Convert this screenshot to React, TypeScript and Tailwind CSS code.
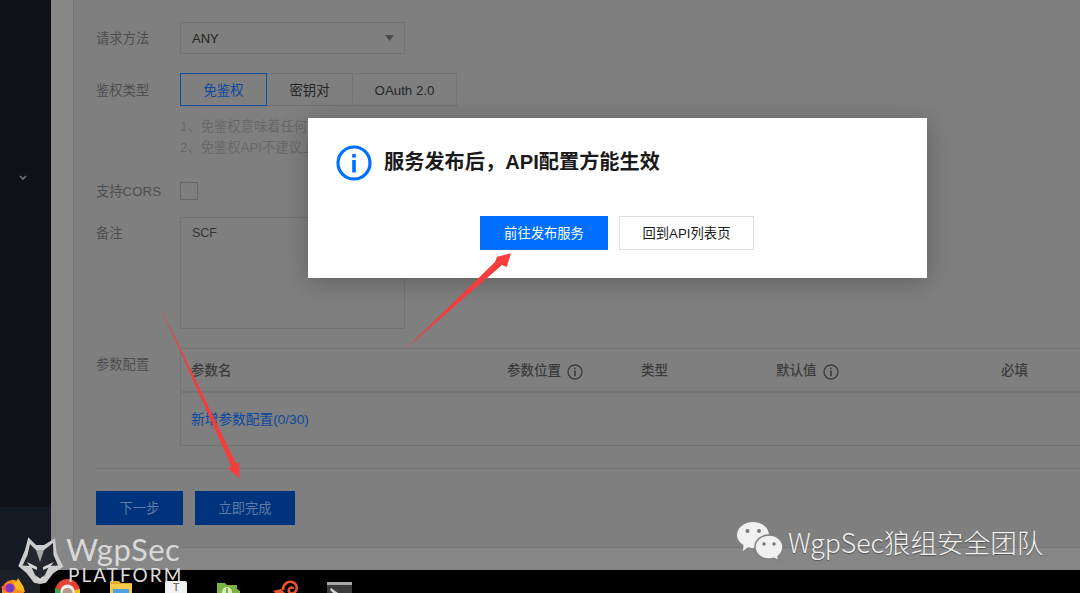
import React from "react";

const Info = ({ size = 16 }: { size?: number }) => (
  <svg width={size} height={size} viewBox="0 0 16 16" fill="none" className="shrink-0">
    <circle cx="8" cy="8" r="7" stroke="currentColor" strokeWidth="1.3" />
    <rect x="7.2" y="3.6" width="1.6" height="1.6" fill="currentColor" />
    <rect x="7.2" y="6.4" width="1.6" height="5.8" fill="currentColor" />
  </svg>
);

const Label = ({ children, className = "" }: { children: React.ReactNode; className?: string }) => (
  <div className={`w-[84px] shrink-0 text-[13.3px] text-[#4e4e4e] ${className}`}>{children}</div>
);

const Arrows = () => (
  <svg className="absolute left-0 top-0 pointer-events-none" width="1080" height="593" viewBox="0 0 1080 593">
    <polygon points="405,349.5 495,262 497,256.7 511,253.3 506.7,267 502,265" fill="#f43d3d" />
    <polygon points="160,306 236,463.5 239.3,462.5 239.3,478.3 227.7,468.3 231.5,466.5" fill="#f43d3d" />
  </svg>
);

const WolfLogo = () => (
  <svg className="absolute left-[17px] top-[535px]" width="48" height="50" viewBox="0 0 48 50" fill="none">
    <path d="M11.3 2.3 L19 10 L27 10 L38 3.3 L39.7 18.3 L46.3 31.7 L36.3 38.3 L29 47.7 L23 49 L17 47.7 L9.7 38.3 L1.3 31 L8 15 Z" fill="#cdcdcd" />
    <path d="M13 9 L19 15 L27 15 L36 8 L36.5 20 L41 30.5 L32 31 L28 40 L23 44 L18 40 L14 31 L5.5 30.5 L10.5 20 Z" fill="#24272e" />
    <path d="M19 15 L27 15 L23 27 Z" fill="#a5a5a5" />
    <path d="M10 27 L20 32 L20 35 L13 32 Z M37 27 L26 32 L26 35 L33 32 Z" fill="#d6d6d6" />
    <path d="M20 42 L23 45 L26 42" stroke="#e0e0e0" strokeWidth="1.4" />
  </svg>
);

const WeChat = () => (
  <svg className="absolute left-[737px] top-[522px]" width="46" height="40" viewBox="0 0 46 40">
    <path d="M16 0 C25 0 32 6 32 13 C32 20 25 26 16 26 C14 26 12.5 25.8 11 25.3 L6 29 L6.5 23 C2.5 20.5 0 17 0 13 C0 6 7 0 16 0 Z" fill="#f0f0f0" />
    <circle cx="10.5" cy="9" r="2" fill="#777" />
    <circle cx="22" cy="9" r="2" fill="#777" />
    <path d="M32 13 C40 13 46 18.5 46 25 C46 29 44 32 41 34.5 L42 39 L37 36.3 C35.5 36.8 34 37 32 37 C24 37 18 31.7 18 25 C18 18.5 24 13 32 13 Z" fill="#f0f0f0" stroke="#808080" strokeWidth="1.5" />
    <circle cx="27" cy="22" r="1.7" fill="#777" />
    <circle cx="37" cy="22" r="1.7" fill="#777" />
  </svg>
);

const Taskbar = () => (
  <div className="h-[23px] bg-black flex items-start overflow-hidden shrink-0">
    <div className="w-[40px] h-[23px] bg-[#1d2127] shrink-0 pl-[1px] pt-[8px] overflow-hidden">
      <svg width="24" height="24" viewBox="0 0 24 24">
        <circle cx="12" cy="13" r="11" fill="#ff8a1c" />
        <path d="M11 1 L15 5 L17 0 L22 8 L24 14 L16 12 Z" fill="#ffb821" />
        <path d="M0 9 L6 6 L12 10 L4 14 Z" fill="#ff5a3c" />
        <circle cx="9" cy="10" r="4.5" fill="#7d36c7" />
      </svg>
    </div>
    <svg className="ml-[15px] mt-[9px] shrink-0" width="25" height="25" viewBox="0 0 25 25">
      <circle cx="12.5" cy="12.5" r="12.5" fill="#e54335" />
      <path d="M0 9 L8 12 L12 25 A12.5 12.5 0 0 1 0 9 Z" fill="#34a853" />
      <path d="M25 10 L16 12 L14 25 A12.5 12.5 0 0 0 25 10 Z" fill="#f5bd22" />
      <circle cx="12.5" cy="12.5" r="7" fill="#f4efe8" />
      <circle cx="12.5" cy="14" r="5.2" fill="#b59a8a" />
    </svg>
    <svg className="ml-[30px] mt-[11px] shrink-0" width="22" height="22" viewBox="0 0 22 22">
      <path d="M0 0 H9 L11 2 H22 V22 H0 Z" fill="#e5a92f" />
      <rect y="3" width="22" height="19" fill="#f7c948" />
      <rect x="3" y="8" width="16" height="14" fill="#4aa3e0" />
    </svg>
    <div className="ml-[33px] mt-[11px] w-[22px] h-[12px] bg-[#f2f2f2] rounded-t-[2px] shrink-0 text-center text-[#555] text-[11px] leading-[12px] font-['Liberation_Sans',sans-serif]">
      T
    </div>
    <svg className="ml-[30px] mt-[13px] shrink-0" width="23" height="20" viewBox="0 0 23 20">
      <path d="M0 0 H8 L10 2 H20 V6 L23 8 V20 H0 Z" fill="#7cb342" />
      <circle cx="10" cy="9" r="5" fill="#d9ecb8" />
      <rect x="9" y="5" width="2" height="6" fill="#7cb342" />
    </svg>
    <svg className="ml-[33px] mt-[10px] shrink-0" width="26" height="23" viewBox="0 0 26 23" fill="none">
      <path d="M0 11 L8 9 L12 13 L8 18" fill="#e5542a" />
      <path d="M10 10 C10 4 15 1 19 2 C24 3 25 9 22 12 C19 15 15 13 16 9 C17 7 20 7 20 9" stroke="#e5542a" strokeWidth="2.6" />
    </svg>
    <svg className="ml-[28px] mt-[12px] shrink-0" width="25" height="21" viewBox="0 0 25 21">
      <rect width="25" height="21" rx="2" fill="#3b3b3b" />
      <rect width="25" height="3" fill="#a8a8a8" />
      <path d="M4 6 L11 11 L8.5 13 L3 8 Z" fill="#d5d5d5" />
    </svg>
  </div>
);

export default function App() {
  return (
    <div className="relative w-[1080px] h-[593px] overflow-hidden flex flex-col bg-black font-['Liberation_Sans','Noto_Sans_CJK_SC',sans-serif]">
      <div className="flex h-[570px] shrink-0">
        <aside className="w-[51px] shrink-0 flex flex-col bg-[#101217]">
          <div className="flex-1 pt-[175px] pl-[19px]">
            <svg width="8" height="6" viewBox="0 0 8 6" fill="none">
              <path d="M1 1 L4 4 L7 1" stroke="#6f7277" strokeWidth="1.6" />
            </svg>
          </div>
          <div className="h-[63px] bg-[#141924]" />
        </aside>
        <main className="flex-1 min-w-0 bg-[#868686] pl-[22px] pb-[22px]">
          <div className="h-full bg-[#7f7f7f] border-l border-b border-[#757575] pl-[22px] pt-[22px] overflow-hidden">
            <div className="flex items-center h-[32px]">
              <Label className="pt-[2px]">请求方法</Label>
              <div className="w-[225px] h-[32px] border border-[#737373] flex items-center justify-between pl-[11px] pr-[10px] pt-[2px] text-[13px] text-[#222]">
                ANY
                <svg width="9" height="6" viewBox="0 0 9 6" className="-mt-[2px]">
                  <polygon points="0,0 9,0 4.5,6" fill="#4a4a4a" />
                </svg>
              </div>
            </div>
            <div className="flex items-center h-[33px] mt-[19px]">
              <Label className="pt-[2px]">鉴权类型</Label>
              <div className="flex h-[33px] text-[13.3px] text-[#262626]">
                <div className="w-[87px] pt-[3px] border border-[#0f4ea3] text-[#0c48a0] flex items-center justify-center">免鉴权</div>
                <div className="w-[86px] pt-[3px] border-y border-r border-[#737373] flex items-center justify-center">密钥对</div>
                <div className="w-[104px] pt-[3px] border-y border-r border-[#737373] flex items-center justify-center">OAuth 2.0</div>
              </div>
            </div>
            <div className="ml-[84px] mt-[10px] text-[13.3px] leading-[21px] text-[#686868]">
              <div>1、免鉴权意味着任何人都可以访问</div>
              <div>2、免鉴权API不建议上线使用</div>
            </div>
            <div className="flex items-center h-[18px] mt-[24px]">
              <Label className="pt-[2px]">支持CORS</Label>
              <div className="w-[18px] h-[18px] border border-[#666]" />
            </div>
            <div className="flex mt-[17px]">
              <Label className="pt-[7px]">备注</Label>
              <div className="w-[225px] h-[112px] border border-[#737373] pl-[11px] pt-[6px] text-[12.5px] text-[#333]">SCF</div>
            </div>
            <div className="flex mt-[19px]">
              <Label className="pt-[7px]">参数配置</Label>
              <div className="w-[920px] shrink-0 border-y border-l border-[#737373] h-[98px]">
                <div className="h-[44px] pt-[3px] border-b-2 border-[#767676] grid grid-cols-[316px_134px_135px_225px_1fr] items-center pl-[10px] text-[13.5px] font-medium text-[#3c3c3c]">
                  <div>参数名</div>
                  <div className="flex items-center gap-[6px]">参数位置<Info /></div>
                  <div>类型</div>
                  <div className="flex items-center gap-[6px]">默认值<Info /></div>
                  <div>必填</div>
                </div>
                <div className="pl-[10px] pt-[18px] text-[13.7px] leading-[18px] text-[#0c48a0]">新增参数配置(0/30)</div>
              </div>
            </div>
            <div className="h-px bg-[#737373] mt-[22px]" />
            <div className="flex gap-[12px] mt-[22px]">
              <div className="w-[87px] h-[34px] pt-[2px] bg-[#00337d] text-[#5f7ba6] text-[13.3px] flex items-center justify-center">下一步</div>
              <div className="w-[100px] h-[34px] pt-[2px] bg-[#00337d] text-[#5f7ba6] text-[13.3px] flex items-center justify-center">立即完成</div>
            </div>
          </div>
        </main>
      </div>
      <Taskbar />

      <div className="absolute left-[308px] top-[118px] w-[619px] h-[160px] bg-white shadow-[0_4px_24px_rgba(0,0,0,0.25)] pt-[27px] pl-[28px]">
        <div className="flex items-center gap-[12px] h-[36px]">
          <svg width="36" height="36" viewBox="0 0 36 36" fill="none">
            <circle cx="18" cy="18" r="16" stroke="#006eff" strokeWidth="3.2" />
            <rect x="16.2" y="9" width="3.6" height="3.6" fill="#006eff" />
            <rect x="16.2" y="15" width="3.6" height="12.5" fill="#006eff" />
          </svg>
          <div className="text-[20.2px] font-bold text-[#1a1a1a] relative -top-[1px]">服务发布后，API配置方能生效</div>
        </div>
        <div className="flex gap-[11px] mt-[35px] ml-[144px]">
          <div className="w-[128px] h-[34px] pt-[2px] bg-[#006eff] text-white text-[13.3px] flex items-center justify-center">前往发布服务</div>
          <div className="w-[135px] h-[34px] pt-[2px] border border-[#dddddd] text-[#1a1a1a] text-[13.3px] flex items-center justify-center">回到API列表页</div>
        </div>
      </div>

      <Arrows />
      <WolfLogo />
      <div className="absolute left-[66px] top-[534px] text-[31px] leading-[30px] font-['Lato',sans-serif] font-normal text-[#d8d8d8] tracking-[0.5px]">WgpSec</div>
      <div className="absolute left-[68px] top-[565px] text-[19px] leading-[20px] font-['Lato',sans-serif] font-normal text-[#dcdcdc] tracking-[2px]">PLATFORM</div>
      <WeChat />
      <div className="absolute left-[788px] top-[522px] text-[26.6px] leading-[40px] font-['Noto_Sans_CJK_SC',sans-serif] font-light text-[#f2f2f2] whitespace-nowrap [text-shadow:0_1px_1px_rgba(0,0,0,0.4)]">WgpSec狼组安全团队</div>
    </div>
  );
}
